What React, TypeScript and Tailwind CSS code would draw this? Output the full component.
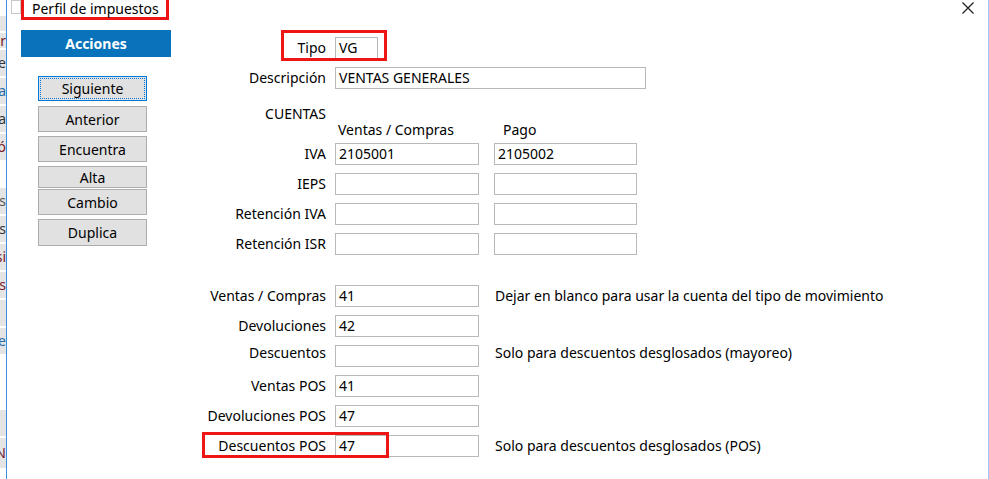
import React from "react";

const font = { fontFamily: '"Noto Sans", "Open Sans", sans-serif' };

function Input({ value = "", w }: { value?: string; w: string }) {
  return (
    <div className={`${w} h-[22px] border border-[#b9b9b9] bg-white flex items-center pl-[3px] text-[14px] text-black leading-none`}>
      {value}
    </div>
  );
}

function Label({ children, extra = "" }: { children: React.ReactNode; extra?: string }) {
  return (
    <div className={`w-[130px] text-right text-[14px] text-black leading-none ${extra}`}>{children}</div>
  );
}

function Btn({ children, h = "h-[26px]", focused = false }: { children: React.ReactNode; h?: string; focused?: boolean }) {
  return (
    <div
      className={`w-[109px] ${h} flex items-center justify-center text-[14px] text-black bg-[#e1e1e1] border ${
        focused ? "border-[#0078d7] outline outline-1 outline-dotted outline-[#0078d7] -outline-offset-[3px]" : "border-[#adadad]"
      }`}
    >
      {children}
    </div>
  );
}

const stripCells: { h: string; bg: string; ch: string; color: string }[] = [
  { h: "h-[14px]", bg: "bg-white", ch: "", color: "" },
  { h: "h-[15px]", bg: "bg-[#e4e4e4]", ch: "", color: "" },
  { h: "h-[15px]", bg: "bg-[#e4e4e4]", ch: "r", color: "text-[#7a1a2a]" },
  { h: "h-[26px]", bg: "bg-[#e4e4e4]", ch: "e", color: "text-[#333]" },
  { h: "h-[26px]", bg: "bg-[#e4e4e4]", ch: "a", color: "text-[#2a6aa8]" },
  { h: "h-[26px]", bg: "bg-[#e4e4e4]", ch: "a", color: "text-[#333]" },
  { h: "h-[26px]", bg: "bg-[#e4e4e4]", ch: "ó", color: "text-[#7a1a2a]" },
  { h: "h-[24px]", bg: "bg-white", ch: "", color: "" },
  { h: "h-[26px]", bg: "bg-[#e4e4e4]", ch: "s", color: "text-[#555]" },
  { h: "h-[26px]", bg: "bg-[#e4e4e4]", ch: "s", color: "text-[#333]" },
  { h: "h-[26px]", bg: "bg-[#e4e4e4]", ch: "si", color: "text-[#7a1a2a]" },
  { h: "h-[26px]", bg: "bg-[#e4e4e4]", ch: "os", color: "text-[#7a1a2a]" },
  { h: "h-[26px]", bg: "bg-[#e4e4e4]", ch: "", color: "" },
  { h: "h-[26px]", bg: "bg-[#e4e4e4]", ch: "e", color: "text-[#2a6aa8]" },
  { h: "h-[52px]", bg: "bg-white", ch: "", color: "" },
  { h: "h-[26px]", bg: "bg-[#e4e4e4]", ch: "", color: "" },
  { h: "h-[30px]", bg: "bg-[#e4e4e4]", ch: "N", color: "text-[#6a1a3a]" },
];

export default function App() {
  return (
    <div className="w-[989px] h-[479px] flex bg-white overflow-hidden" style={font}>
      {/* background window strip */}
      <div className="w-[6px] flex flex-col gap-[2px] overflow-hidden">
        {stripCells.map((c, i) => (
          <div key={i} className={`${c.h} ${c.bg} flex items-center justify-end overflow-hidden text-[14px] leading-none shrink-0 ${c.color}`}>
            {c.ch}
          </div>
        ))}
      </div>
      <div className="w-[1px] bg-[#3a8fe0]" />

      {/* dialog */}
      <div className="flex-1 flex flex-col border-r border-[#9cc8f5] relative">
        {/* title bar */}
        <div className="h-[30px] flex items-start relative">
          <div className="ml-[4px] mt-0 w-[10px] h-[14px] border border-[#c8c8c8] bg-white" />
          <div className="ml-[0px] -mt-[3px] h-[23px] w-[148px] border-[3px] border-[#ee1515] flex items-center pl-[8px] text-[14px] text-black leading-none">
            Perfil de impuestos
          </div>
          <div className="ml-auto mr-[13px] mt-[1px]">
            <svg width="14" height="14" viewBox="0 0 14 14">
              <path d="M1.5 1.5 L12.5 12.5 M12.5 1.5 L1.5 12.5" stroke="#222" strokeWidth="1.3" />
            </svg>
          </div>
        </div>

        {/* body */}
        <div className="flex">
          {/* sidebar */}
          <div className="ml-[14px] w-[150px] flex flex-col">
            <div className="h-[27px] bg-[#0873bb] flex items-center justify-center text-white font-bold text-[14px]">
              Acciones
            </div>
            <div className="ml-[17px] mt-[19px] flex flex-col">
              <Btn h="h-[25px]" focused>Siguiente</Btn>
              <div className="mt-[5px]"><Btn>Anterior</Btn></div>
              <div className="mt-[4px]"><Btn>Encuentra</Btn></div>
              <div className="mt-[4px]"><Btn h="h-[22px]">Alta</Btn></div>
              <div className="mt-[1px]"><Btn>Cambio</Btn></div>
              <div className="mt-[4px]"><Btn h="h-[27px]">Duplica</Btn></div>
            </div>
          </div>

          {/* form */}
          <div className="ml-[25px] mt-[7px] flex flex-col">
            {/* Tipo */}
            <div className="flex items-center gap-[9px] h-[22px] relative">
              <Label>Tipo</Label>
              <Input value="VG" w="w-[43px]" />
              <div className="absolute left-[85px] -top-[7px] w-[106px] h-[31px] border-[3px] border-[#ee1515]" />
            </div>
            {/* Descripcion */}
            <div className="flex items-center gap-[9px] h-[22px] mt-[8px]">
              <Label>Descripción</Label>
              <Input value="VENTAS GENERALES" w="w-[311px]" />
            </div>
            {/* CUENTAS */}
            <div className="flex items-center h-[16px] mt-[17px]">
              <Label>CUENTAS</Label>
            </div>
            <div className="flex items-center h-[16px] text-[14px] text-black leading-none">
              <div className="w-[130px]" />
              <div className="ml-[12px] w-[155px]">Ventas / Compras</div>
              <div className="ml-[10px]">Pago</div>
            </div>
            {[
              ["IVA", "2105001", "2105002"],
              ["IEPS", "", ""],
              ["Retención IVA", "", ""],
              ["Retención ISR", "", ""],
            ].map(([l, a, b], i) => (
              <div key={l} className={`flex items-center gap-[9px] h-[22px] ${i === 0 ? "mt-[5px]" : "mt-[8px]"}`}>
                <Label>{l}</Label>
                <Input value={a} w="w-[144px]" />
                <div className="ml-[6px]">
                  <Input value={b} w="w-[143px]" />
                </div>
              </div>
            ))}

            {[
              ["Ventas / Compras", "41", "Dejar en blanco para usar la cuenta del tipo de movimiento"],
              ["Devoluciones", "42", ""],
              ["Descuentos", "", "Solo para descuentos desglosados (mayoreo)"],
              ["Ventas POS", "41", ""],
              ["Devoluciones POS", "47", ""],
              ["Descuentos POS", "47", "Solo para descuentos desglosados (POS)"],
            ].map(([l, v, hint], i) => (
              <div key={l} className={`flex items-center gap-[9px] h-[22px] relative ${i === 0 ? "mt-[30px]" : "mt-[8px]"}`}>
                <Label extra={l === "Descuentos" ? "pb-[6px]" : ""}>{l}</Label>
                <Input value={v} w="w-[144px]" />
                {hint && (
                  <div className={`ml-[7px] text-[14px] text-black leading-none whitespace-nowrap ${l === "Descuentos" ? "pb-[6px]" : ""}`}>
                    {hint}
                  </div>
                )}
                {l === "Descuentos POS" && (
                  <div className="absolute left-[6px] -top-[3px] w-[187px] h-[26px] border-[3px] border-[#ee1515]" />
                )}
              </div>
            ))}
          </div>
        </div>
      </div>
    </div>
  );
}
